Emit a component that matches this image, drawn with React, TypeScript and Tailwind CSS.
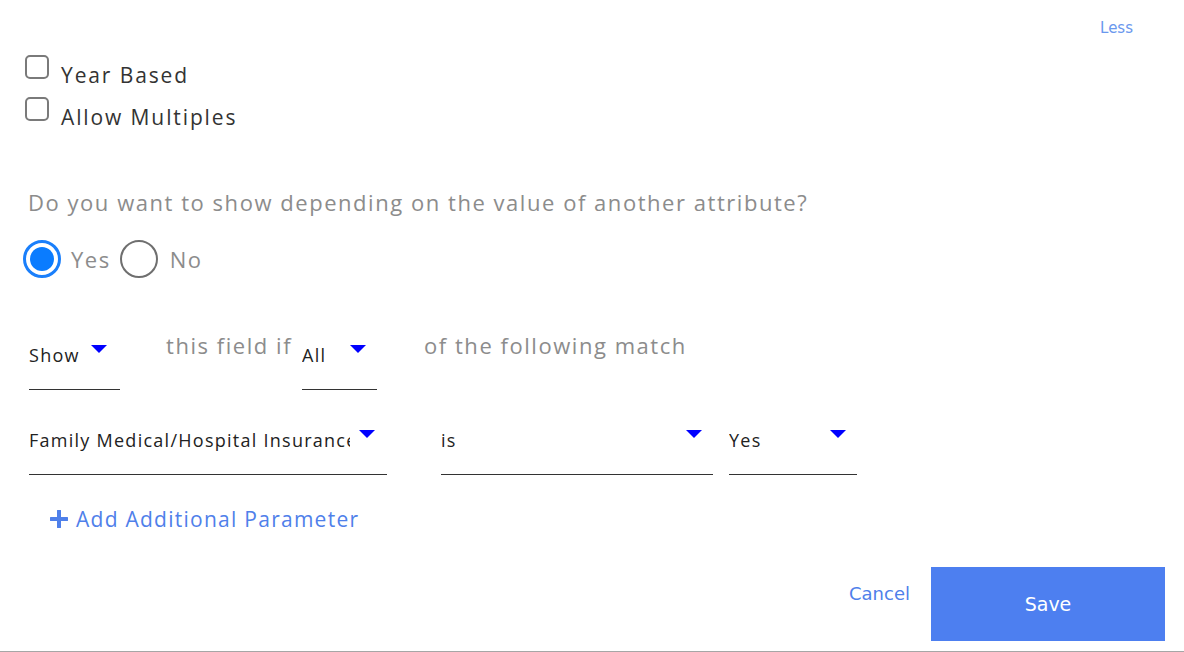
import React, { useState } from 'react';

const Caret = () => (
  <svg width="16" height="8" viewBox="0 0 16 8" className="shrink-0">
    <path d="M0 0 L16 0 L8 8 Z" fill="#0000ff" />
  </svg>
);

const Plus = () => (
  <svg width="18" height="18" viewBox="0 0 18 18" className="shrink-0">
    <path d="M9 1 V17 M1 9 H17" stroke="#4f80ea" strokeWidth="4" strokeLinecap="round" />
  </svg>
);

type DropProps = {
  value: string;
  width: string;
  textWidth: string;
  arrowRight: string;
};

const Drop = ({ value, width, textWidth, arrowRight }: DropProps) => (
  <div className={`flex items-start h-[55px] border-b border-[#333] ${width}`}>
    <span
      className={`mt-[7px] text-[18px] leading-[26px] tracking-[0.07em] text-[#222] whitespace-nowrap overflow-hidden ${textWidth}`}
    >
      {value}
    </span>
    <span className={`ml-auto mt-[10px] ${arrowRight}`}>
      <Caret />
    </span>
  </div>
);

const Check = ({ label }: { label: string }) => (
  <label className="flex items-start pl-[25px] cursor-pointer">
    <span className="w-[24px] h-[24px] rounded-[5px] border-2 border-[#7a7a7a] bg-white shrink-0" />
    <span className="ml-[12px] mt-[6px] text-[21px] leading-[28px] tracking-[0.09em] text-[#333]">{label}</span>
  </label>
);

export default function App() {
  const [answer, setAnswer] = useState<'yes' | 'no'>('yes');

  return (
    <div className="w-[1184px] h-[652px] bg-white border-b border-[#a6a6a6] overflow-hidden font-['Open_Sans',sans-serif]">
      <div className="flex justify-end pr-[51px] pt-[19px]">
        <button className="text-[15px] leading-[18px] text-[#6a98ee] font-['DejaVu_Sans',sans-serif]">Less</button>
      </div>

      <div className="mt-[18px]">
        <Check label="Year Based" />
      </div>
      <div className="mt-[8px]">
        <Check label="Allow Multiples" />
      </div>

      <p className="mt-[56px] pl-[28px] text-[22px] leading-[30px] tracking-[0.07em] text-[#8c8c8c]">
        Do you want to show depending on the value of another attribute?
      </p>

      <div className="mt-[23px] pl-[23px] flex items-center h-[38px]">
        <button
          onClick={() => setAnswer('yes')}
          className={`w-[38px] h-[38px] rounded-full p-[4px] ${
            answer === 'yes' ? 'border-[3px] border-[#1a7ffb]' : 'border-2 border-[#6f6f6f]'
          }`}
        >
          {answer === 'yes' && <span className="block w-full h-full rounded-full bg-[#0a7cff]" />}
        </button>
        <span className="ml-[10px] text-[22px] tracking-[0.07em] text-[#8c8c8c]">Yes</span>
        <button
          onClick={() => setAnswer('no')}
          className={`ml-[9px] w-[38px] h-[38px] rounded-full p-[4px] ${
            answer === 'no' ? 'border-[3px] border-[#1a7ffb]' : 'border-2 border-[#6f6f6f]'
          }`}
        >
          {answer === 'no' && <span className="block w-full h-full rounded-full bg-[#0a7cff]" />}
        </button>
        <span className="ml-[12px] text-[22px] tracking-[0.07em] text-[#8c8c8c]">No</span>
      </div>

      <div className="mt-[52px] pl-[29px] flex items-start">
        <div className="mt-[5px]">
          <Drop value="Show" width="w-[91px]" textWidth="w-[60px]" arrowRight="mr-[13px]" />
        </div>
        <span className="ml-[46px] w-[136px] whitespace-nowrap text-[22px] leading-[30px] tracking-[0.07em] text-[#8c8c8c]">
          this field if
        </span>
        <div className="mt-[5px]">
          <Drop value="All" width="w-[75px]" textWidth="w-[40px]" arrowRight="mr-[11px]" />
        </div>
        <span className="ml-[47px] whitespace-nowrap text-[22px] leading-[30px] tracking-[0.07em] text-[#8c8c8c]">
          of the following match
        </span>
      </div>

      <div className="mt-[30px] pl-[29px] flex items-start">
        <Drop
          value="Family Medical/Hospital Insurance"
          width="w-[358px]"
          textWidth="w-[321px]"
          arrowRight="mr-[12px]"
        />
        <div className="ml-[54px]">
          <Drop value="is" width="w-[272px]" textWidth="w-[200px]" arrowRight="mr-[11px]" />
        </div>
        <div className="ml-[16px]">
          <Drop value="Yes" width="w-[128px]" textWidth="w-[80px]" arrowRight="mr-[11px]" />
        </div>
      </div>

      <button className="mt-[29px] ml-[50px] flex items-center h-[30px]">
        <Plus />
        <span className="ml-[8px] text-[21px] leading-[30px] tracking-[0.06em] text-[#4f80ea]">Add Additional Parameter</span>
      </button>

      <div className="mt-[33px] pr-[19px] flex justify-end items-start font-['DejaVu_Sans',sans-serif]">
        <button className="mt-[15px] text-[18px] leading-[24px] text-[#4f80ea]">Cancel</button>
        <button className="ml-[21px] w-[234px] h-[74px] bg-[#4d7ff0] text-white text-[19px]">Save</button>
      </div>
    </div>
  );
}
